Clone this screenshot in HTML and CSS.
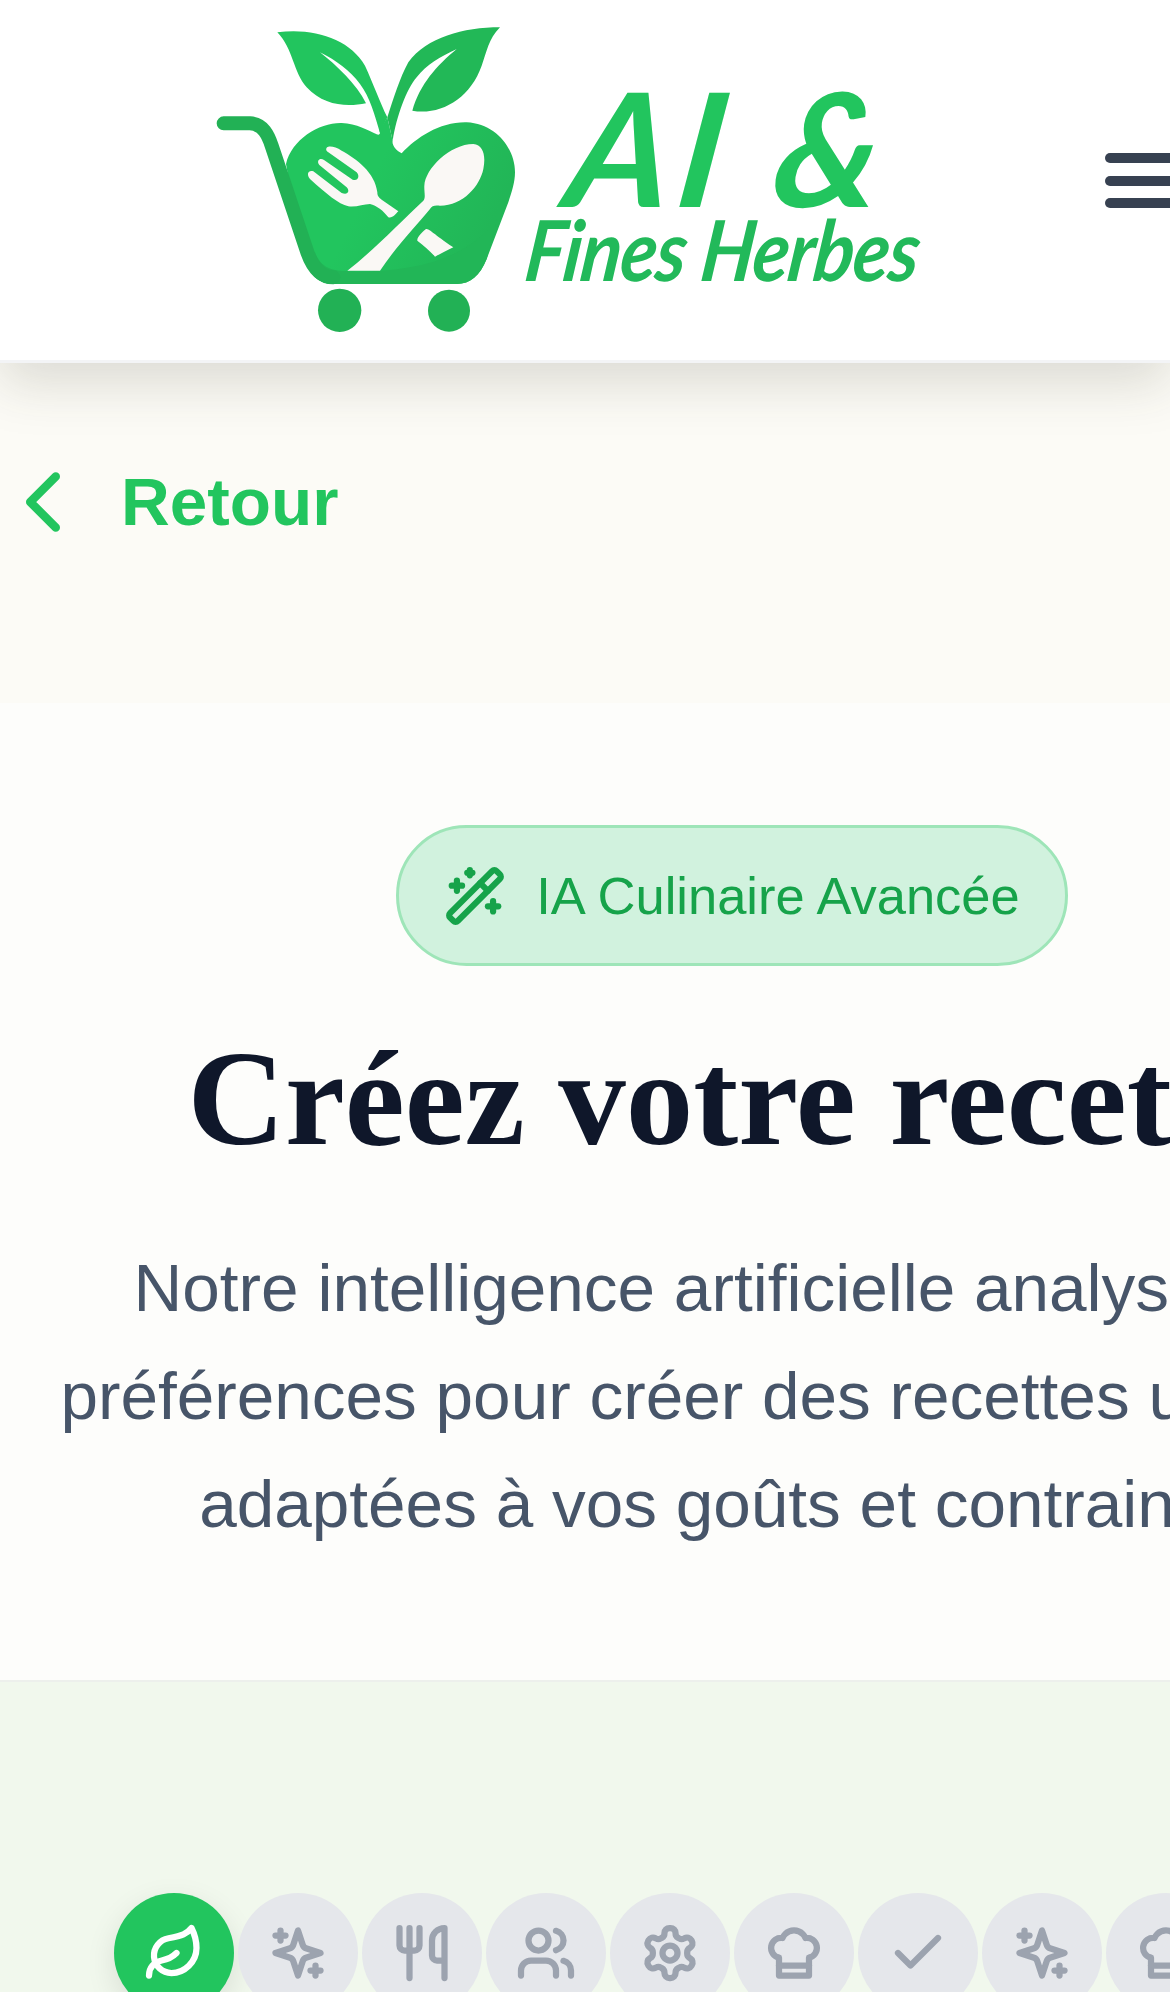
FILE: index.html
```html
<!DOCTYPE html>
<html lang="fr">
<head>
<meta charset="utf-8">
<title>Créez votre recette</title>
<link rel="stylesheet" href="styles.css">
</head>
<body>
<div class="page">
  <header class="header">
    <a class="logo">
      <svg class="logo-mark" viewBox="0 0 1020 1020">
        <defs>
          <linearGradient id="apple" x1="0" y1="0" x2="1" y2="0.35">
            <stop offset="0.45" stop-color="#22c55e"/>
            <stop offset="1" stop-color="#22b657"/>
          </linearGradient>
        </defs>
        <path fill="#22c55e" d="M232 70C340 55 450 90 495 170C520 225 540 280 562 325L540 372C525 320 510 265 480 225C450 185 410 155 360 130C410 170 470 225 498 283C440 295 370 290 320 235C280 190 280 120 232 70Z"/>
        <path fill="#22b857" d="M900 55C790 55 680 85 625 160C600 205 580 270 562 325L578 395C590 320 620 240 650 205C680 165 720 145 770 120C710 170 660 225 637 305C720 320 810 270 845 170C860 130 865 90 900 55Z"/>
        <path fill="url(#apple)" d="M258 465C275 390 360 340 425 342C470 343 505 365 530 376C540 380 542 372 538 365L562 325L578 395C575 410 590 425 605 433C650 385 720 338 800 340C890 345 945 420 945 490C945 520 935 550 925 580L860 750C840 800 810 825 770 825L400 825C350 825 325 790 305 730Z"/>
        <path fill="#22b657" d="M345 730C365 785 410 785 450 787C650 790 800 750 892 630L860 750C840 800 810 825 770 825L400 825C350 825 325 790 305 730Z"/>
        <path fill="none" stroke="#22b155" stroke-width="42" stroke-linecap="round" stroke-linejoin="round" d="M71 343L150 343C190 345 205 380 215 410L322 730C340 780 365 805 400 805"/>
        <path fill="#faf8f5" d="M385 413C395 411 410 415 425 425C470 450 525 490 532 550C532 560 535 565 545 572L595 607C585 617 578 628 565 625C550 605 530 590 510 585C490 585 470 595 445 592C415 585 380 555 330 510C318 495 325 482 340 487L425 552C445 560 450 545 440 535L358 468C348 455 360 445 372 453L458 512C475 518 480 500 470 490L385 430C375 423 378 415 385 413Z"/>
        <path fill="#faf8f5" d="M820 405C850 408 858 440 850 480C840 530 790 590 720 590C705 588 695 590 690 600C650 650 590 710 540 785L442 785C520 725 600 640 670 575C678 565 672 550 673 530C675 480 750 405 820 405Z"/>
        <path fill="#faf8f5" d="M678 660C690 660 700 675 760 715C740 725 720 735 705 743C690 725 670 710 652 695C650 685 668 668 678 660Z"/>
        <circle cx="419" cy="904" r="65" fill="#22b155"/>
        <circle cx="747" cy="905" r="63" fill="#22b155"/>
      </svg>
      <span class="logo-text">
        <span class="logo-ai">AI &amp;</span>
        <span class="logo-herbes">Fines Herbes</span>
      </span>
    </a>
    <button class="menu-btn" aria-label="Menu">
      <span class="menu-bar"></span>
      <span class="menu-bar"></span>
      <span class="menu-bar"></span>
    </button>
  </header>

  <div class="back-row">
    <a class="back-link">
      <svg class="back-icon" viewBox="8 5 8 14"><path d="m15 18-6-6 6-6"/></svg>
      <span>Retour</span>
    </a>
  </div>

  <section class="hero">
    <div class="badge">
      <svg class="badge-icon" viewBox="0 0 24 24"><path d="m21.64 3.64-1.28-1.28a1.21 1.21 0 0 0-1.72 0L2.36 18.64a1.21 1.21 0 0 0 0 1.72l1.28 1.28a1.2 1.2 0 0 0 1.72 0L21.64 5.36a1.2 1.2 0 0 0 0-1.72Z"/><path d="m14 7 3 3"/><path d="M5 6v4"/><path d="M19 14v4"/><path d="M10 2v2"/><path d="M7 8H3"/><path d="M21 16h-4"/><path d="M11 3H9"/></svg>
      <span>IA Culinaire Avancée</span>
    </div>
    <h1 class="title">Créez votre recette</h1>
    <p class="lead">Notre intelligence artificielle analyse vos<br>préférences pour créer des recettes uniques,<br>adaptées à vos goûts et contraintes</p>
  </section>

  <section class="stepper">
    <div class="step step-active"><svg class="step-icon" viewBox="0 0 24 24"><path d="M11 20A7 7 0 0 1 9.8 6.1C15.5 5 17 4.48 19 2c1 2 2 4.18 2 8 0 5.5-4.78 10-10 10Z"/><path d="M2 21c0-3 1.85-5.36 5.08-6C9.5 14.52 12 13 13 12"/></svg></div>
    <div class="step"><svg class="step-icon" viewBox="0 0 24 24"><path d="m12 3-1.912 5.813a2 2 0 0 1-1.275 1.275L3 12l5.813 1.912a2 2 0 0 1 1.275 1.275L12 21l1.912-5.813a2 2 0 0 1 1.275-1.275L21 12l-5.813-1.912a2 2 0 0 1-1.275-1.275L12 3Z"/><path d="M5 3v4"/><path d="M19 17v4"/><path d="M3 5h4"/><path d="M17 19h4"/></svg></div>
    <div class="step"><svg class="step-icon" viewBox="0 0 24 24"><path d="M3 2v7c0 1.1.9 2 2 2h4a2 2 0 0 0 2-2V2"/><path d="M7 2v20"/><path d="M21 15V2v0a5 5 0 0 0-5 5v6c0 1.1.9 2 2 2h3Zm0 0v7"/></svg></div>
    <div class="step"><svg class="step-icon" viewBox="0 0 24 24"><path d="M16 21v-2a4 4 0 0 0-4-4H6a4 4 0 0 0-4 4v2"/><circle cx="9" cy="7" r="4"/><path d="M22 21v-2a4 4 0 0 0-3-3.87"/><path d="M16 3.13a4 4 0 0 1 0 7.75"/></svg></div>
    <div class="step"><svg class="step-icon" viewBox="0 0 24 24"><path d="M12.22 2h-.44a2 2 0 0 0-2 2v.18a2 2 0 0 1-1 1.73l-.43.25a2 2 0 0 1-2 0l-.15-.08a2 2 0 0 0-2.73.73l-.22.38a2 2 0 0 0 .73 2.73l.15.1a2 2 0 0 1 1 1.72v.51a2 2 0 0 1-1 1.74l-.15.09a2 2 0 0 0-.73 2.73l.22.38a2 2 0 0 0 2.73.73l.15-.08a2 2 0 0 1 2 0l.43.25a2 2 0 0 1 1 1.73V20a2 2 0 0 0 2 2h.44a2 2 0 0 0 2-2v-.18a2 2 0 0 1 1-1.73l.43-.25a2 2 0 0 1 2 0l.15.08a2 2 0 0 0 2.73-.73l.22-.39a2 2 0 0 0-.73-2.73l-.15-.08a2 2 0 0 1-1-1.74v-.5a2 2 0 0 1 1-1.74l.15-.09a2 2 0 0 0 .73-2.73l-.22-.38a2 2 0 0 0-2.73-.73l-.15.08a2 2 0 0 1-2 0l-.43-.25a2 2 0 0 1-1-1.73V4a2 2 0 0 0-2-2z"/><circle cx="12" cy="12" r="3"/></svg></div>
    <div class="step"><svg class="step-icon" viewBox="0 0 24 24"><path d="M6 13.87A4 4 0 0 1 7.41 6a5.11 5.11 0 0 1 1.05-1.54 5 5 0 0 1 7.08 0A5.11 5.11 0 0 1 16.59 6 4 4 0 0 1 18 13.87V21H6Z"/><path d="M6 17h12"/></svg></div>
    <div class="step"><svg class="step-icon" viewBox="0 0 24 24"><path d="M20 6 9 17l-5-5"/></svg></div>
    <div class="step"><svg class="step-icon" viewBox="0 0 24 24"><path d="m12 3-1.912 5.813a2 2 0 0 1-1.275 1.275L3 12l5.813 1.912a2 2 0 0 1 1.275 1.275L12 21l1.912-5.813a2 2 0 0 1 1.275-1.275L21 12l-5.813-1.912a2 2 0 0 1-1.275-1.275L12 3Z"/><path d="M5 3v4"/><path d="M19 17v4"/><path d="M3 5h4"/><path d="M17 19h4"/></svg></div>
    <div class="step"><svg class="step-icon" viewBox="0 0 24 24"><path d="M6 13.87A4 4 0 0 1 7.41 6a5.11 5.11 0 0 1 1.05-1.54 5 5 0 0 1 7.08 0A5.11 5.11 0 0 1 16.59 6 4 4 0 0 1 18 13.87V21H6Z"/><path d="M6 17h12"/></svg></div>
    <div class="step"><svg class="step-icon" viewBox="0 0 24 24"><path d="M20 6 9 17l-5-5"/></svg></div>
  </section>
</div>
</body>
</html>
```
FILE: styles.css
```css
* { box-sizing: border-box; }
html, body { margin: 0; padding: 0; width: 1170px; height: 1992px; overflow: hidden; background: #fcfbf6; }
body { font-family: "Liberation Sans", Arial, sans-serif; }

.page { width: 1464px; height: 1992px; overflow: hidden; display: flex; flex-direction: column; }

.header {
  position: relative;
  z-index: 2;
  width: 1170px;
  height: 363px;
  flex: none;
  display: flex;
  align-items: center;
  padding-left: 200px;
  background: #fff;
  border-bottom: 3px solid #f3f4f6;
  box-shadow: 0 20px 50px rgba(60, 60, 40, 0.17);
}
.logo { display: flex; width: 905px; height: 340px; flex: none; align-items: flex-start; margin-top: -3px; }
.logo-mark { width: 340px; height: 340px; flex: none; display: block; }
.logo-text { display: flex; flex-direction: column; margin-left: -18px; color: #22c55e; font-style: italic; font-weight: 700; font-family: Lato, "Open Sans", sans-serif; }
.logo-ai { font-size: 158px; line-height: 130px; margin-top: 72px; margin-left: 40px; letter-spacing: 8px; white-space: nowrap; transform: skewX(-8deg); transform-origin: left bottom; }
.logo-herbes { font-size: 84px; line-height: 76px; color: #22b95a; white-space: nowrap; transform: scaleX(0.89) skewX(-8deg); transform-origin: left bottom; letter-spacing: -1px; }

.menu-btn { flex: none; width: 90px; padding: 0; margin: 0; background: none; border: 0; display: flex; flex-direction: column; gap: 12.5px; margin-top: 1px; }
.menu-bar { display: block; height: 10px; border-radius: 5px; background: #374151; }

.back-row { flex: none; height: 340px; padding: 108px 0 0 26px; background: #fcfbf6; }
.back-link { display: flex; align-items: center; gap: 61px; color: #22c55e; font-size: 67.5px; font-weight: 700; line-height: 62px; }
.back-icon { width: 34px; height: 60px; fill: none; stroke: #22c55e; stroke-width: 2; stroke-linecap: round; stroke-linejoin: round; overflow: visible; display: block; }

.hero {
  flex: none;
  height: 979px;
  padding-top: 122px;
  display: flex;
  flex-direction: column;
  align-items: center;
  background: #fdfdfb;
  border-bottom: 2px solid #edf0ec;
}
.badge {
  display: flex;
  align-items: center;
  gap: 30px;
  height: 141px;
  padding: 0 45px;
  border: 3px solid #9ee5b8;
  border-radius: 71px;
  background: #d1f2de;
  color: #16a34a;
  font-size: 52.5px;
}
.badge-icon { width: 62px; height: 62px; flex: none; fill: none; stroke: #16a34a; stroke-width: 2.4; stroke-linecap: round; stroke-linejoin: round; }
.title { margin: 65px 0 0; font-family: "Liberation Serif", "Times New Roman", serif; font-size: 135px; line-height: 136px; font-weight: 700; color: #0f172a; white-space: nowrap; }
.lead { margin: 67px 0 0; font-size: 67.5px; line-height: 108px; color: #475569; text-align: center; white-space: nowrap; }

.stepper { flex: 1; display: flex; justify-content: center; gap: 4px; padding-top: 211px; background: #f1f8ed; }
.step { width: 120px; height: 120px; flex: none; border-radius: 50%; background: #e5e7eb; display: flex; align-items: center; justify-content: center; }
.step-active { background: #22c55e; box-shadow: 0 10px 30px rgba(0, 0, 0, 0.1); }
.step-icon { width: 60px; height: 60px; fill: none; stroke: #9ca3af; stroke-width: 2.5; stroke-linecap: round; stroke-linejoin: round; }
.step-active .step-icon { stroke: #fff; }
```
